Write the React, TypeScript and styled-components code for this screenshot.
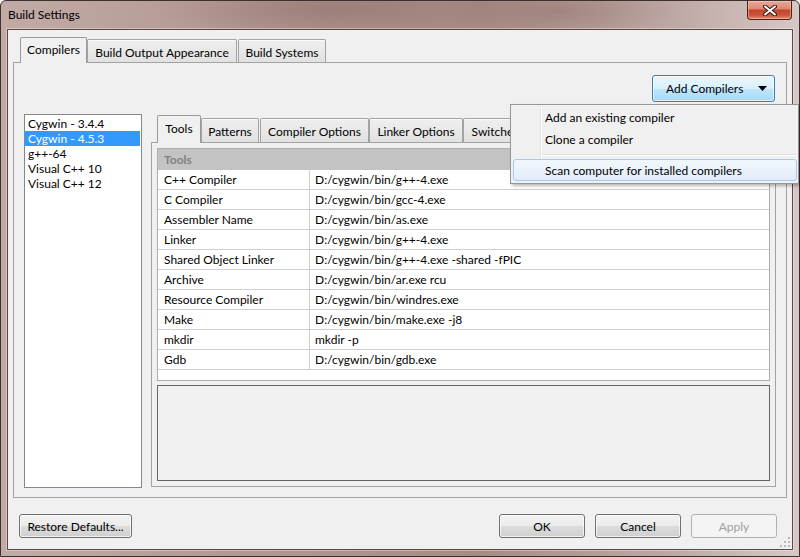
import React from "react";
import styled, { createGlobalStyle, css } from "styled-components";

const FONT = `"Segoe UI", Lato, "Noto Sans", sans-serif`;

const GlobalStyle = createGlobalStyle`
  html, body { margin: 0; padding: 0; background: #ffffff; }
  body { font-family: ${FONT}; font-size: 12px; color: #000; }
  * { box-sizing: border-box; }
`;

const Window = styled.div`
  position: relative;
  width: 800px;
  height: 557px;
  display: flex;
  flex-direction: column;
  border: 1px solid #3d302e;
  border-radius: 6px 6px 0 0;
  background:
    radial-gradient(ellipse 180px 30px at 330px 8px, rgba(120, 90, 85, 0.35), transparent),
    radial-gradient(ellipse 120px 25px at 560px 10px, rgba(120, 90, 85, 0.3), transparent),
    linear-gradient(90deg, #c2aba6 0%, #b39792 30%, #a98b85 60%, #bfa9a5 85%, #d7c8c5 100%);
`;

const TitleBar = styled.div`
  height: 28px;
  display: flex;
  align-items: flex-start;
  justify-content: space-between;
  padding: 0 7px 0 7px;
`;

const Title = styled.div`
  line-height: 28px;
  font-size: 12px;
  color: #000;
`;

const CloseButton = styled.div`
  width: 45px;
  height: 19px;
  border: 1px solid #4f1f16;
  border-top: none;
  border-radius: 0 0 4px 4px;
  background: linear-gradient(#e9a898 0%, #dd8a74 42%, #c4452b 52%, #c9553b 78%, #e28a70 100%);
  box-shadow: inset 0 0 0 1px rgba(255, 220, 210, 0.45);
  display: flex;
  align-items: center;
  justify-content: center;
`;

const Client = styled.div`
  position: relative;
  flex: 1;
  margin: 0 6px 6px 6px;
  border: 1px solid #5a4845;
  box-shadow: 0 0 0 1px rgba(255, 255, 255, 0.35);
  background: #f0f0f0;
  display: flex;
  flex-direction: column;
  padding: 7px 5px 11px 5px;
`;

const TabWidget = styled.div`
  flex: 1;
  display: flex;
  flex-direction: column;
  min-height: 0;
`;

const TabBar = styled.div<{ $h: number; $pad: number }>`
  display: flex;
  align-items: flex-end;
  height: ${(p) => p.$h}px;
  margin-bottom: -1px;
  padding-left: ${(p) => p.$pad}px;
  position: relative;
  z-index: 2;
`;

const Tab = styled.div<{ $selected?: boolean; $w: number; $gap?: number; $h: number }>`
  width: ${(p) => p.$w}px;
  margin-right: ${(p) => p.$gap ?? 0}px;
  height: ${(p) => p.$h}px;
  border: 1px solid #a3a3a3;
  border-bottom: none;
  border-radius: 2px 2px 0 0;
  display: flex;
  justify-content: center;
  align-items: center;
  white-space: nowrap;
  overflow: hidden;
  flex-shrink: 0;
  ${(p) =>
    p.$selected
      ? css`
          background: #f0f0f0;
          border-color: #9a9a9a;
          padding-bottom: 2px;
        `
      : css`
          background: linear-gradient(#efefef, #e1e1e1);
          box-shadow: inset 0 1px 0 #fafafa;
          margin-bottom: 1px;
          padding-top: 2px;
        `}
`;

const Pane = styled.div`
  flex: 1;
  border: 1px solid #a3a3a3;
  background: #f0f0f0;
  display: flex;
  flex-direction: column;
  padding: 12px 10px 9px 10px;
  min-height: 0;
`;

const TopRow = styled.div`
  display: flex;
  justify-content: flex-end;
  padding-right: 1px;
`;

const DropButton = styled.div`
  width: 123px;
  height: 27px;
  border: 1px solid #3c7fb1;
  border-radius: 3px;
  background: linear-gradient(#eaf6fd 0%, #d9f0fc 50%, #bee6fd 51%, #a7d9f5 100%);
  box-shadow: inset 0 0 0 1px rgba(255, 255, 255, 0.6);
  display: flex;
  align-items: center;
  padding-left: 13px;
  gap: 15px;
`;

const MainRow = styled.div`
  flex: 1;
  display: flex;
  gap: 9px;
  margin-top: 12px;
  min-height: 0;
`;

const CompilerList = styled.div`
  width: 118px;
  border: 1px solid #828790;
  background: #fff;
  padding: 1px 1px 1px 0;
  display: flex;
  flex-direction: column;
`;

const ListItem = styled.div<{ $selected?: boolean }>`
  height: 15px;
  line-height: 15px;
  padding-left: 3px;
  white-space: nowrap;
  ${(p) =>
    p.$selected &&
    css`
      background: #3399ff;
      color: #fff;
    `}
`;

const InnerTabs = styled.div`
  flex: 1;
  display: flex;
  flex-direction: column;
  margin-top: 1px;
  margin-bottom: 1px;
  min-width: 0;
`;

const InnerPane = styled.div`
  flex: 1;
  border: 1px solid #a3a3a3;
  background: #f0f0f0;
  padding: 5px;
  display: flex;
  flex-direction: column;
  gap: 4px;
`;

const Table = styled.div`
  height: 233px;
  border: 1px solid #abadb3;
  background: #fff;
  display: flex;
  flex-direction: column;
`;

const HeaderRow = styled.div`
  height: 21px;
  background: #c3c3c3;
  color: #808080;
  font-weight: bold;
  display: flex;
  align-items: center;
  padding-left: 6px;
`;

const Row = styled.div`
  height: 20px;
  display: flex;
  border-bottom: 1px solid #cfcfcf;
`;

const Cell = styled.div<{ $first?: boolean }>`
  display: flex;
  align-items: center;
  white-space: nowrap;
  ${(p) =>
    p.$first
      ? css`
          width: 152px;
          padding-left: 6px;
          border-right: 1px solid #cfcfcf;
        `
      : css`
          flex: 1;
          padding-left: 5px;
        `}
`;

const Details = styled.div`
  flex: 1;
  border: 1px solid #646464;
  background: #f0f0f0;
`;

const ButtonRow = styled.div`
  display: flex;
  align-items: center;
  margin-top: 16px;
  height: 24px;
  padding: 0 10px 0 6px;
  gap: 10px;
`;

const Spacer = styled.div`
  flex: 1;
`;

const PushButton = styled.div<{ $w: number; $disabled?: boolean }>`
  width: ${(p) => p.$w}px;
  height: 24px;
  border-radius: 3px;
  display: flex;
  align-items: center;
  justify-content: center;
  white-space: nowrap;
  ${(p) =>
    p.$disabled
      ? css`
          border: 1px solid #adb2b5;
          background: #f4f4f4;
          color: #a0a0a0;
        `
      : css`
          border: 1px solid #707070;
          background: linear-gradient(#f2f2f2 0%, #ebebeb 50%, #dddddd 51%, #cfcfcf 100%);
          box-shadow: inset 0 0 0 1px rgba(255, 255, 255, 0.7);
          color: #000;
        `}
`;

const Grip = styled.svg`
  position: absolute;
  right: 2px;
  bottom: 2px;
`;

const Menu = styled.div`
  position: absolute;
  left: 509px;
  top: 103px;
  width: 289px;
  background: #f0f0f0;
  border: 1px solid #979797;
  box-shadow: 2px 2px 3px rgba(0, 0, 0, 0.28);
  padding: 1px 1px 2px 2px;
  display: flex;
  flex-direction: column;
  z-index: 10;
  &::before {
    content: "";
    position: absolute;
    left: 29px;
    top: 1px;
    bottom: 1px;
    width: 2px;
    background: linear-gradient(90deg, #e2e3e3 50%, #ffffff 50%);
  }
`;

const MenuItem = styled.div<{ $active?: boolean }>`
  position: relative;
  height: 22px;
  padding-left: 31px;
  border: 1px solid transparent;
  border-radius: 3px;
  display: flex;
  align-items: center;
  white-space: nowrap;
  z-index: 1;
  ${(p) =>
    p.$active &&
    css`
      border-color: #a8caf0;
      background: linear-gradient(#f2f7fd, #e2ecf9);
    `}
`;

const MenuSeparator = styled.div`
  height: 9px;
  margin-left: 28px;
  display: flex;
  align-items: center;
  &::after {
    content: "";
    flex: 1;
    height: 2px;
    background: linear-gradient(#e0e0e0 50%, #ffffff 50%);
  }
`;

const compilers = ["Cygwin - 3.4.4", "Cygwin - 4.5.3", "g++-64", "Visual C++ 10", "Visual C++ 12"];

const rows: [string, string][] = [
  ["C++ Compiler", "D:/cygwin/bin/g++-4.exe"],
  ["C Compiler", "D:/cygwin/bin/gcc-4.exe"],
  ["Assembler Name", "D:/cygwin/bin/as.exe"],
  ["Linker", "D:/cygwin/bin/g++-4.exe"],
  ["Shared Object Linker", "D:/cygwin/bin/g++-4.exe -shared -fPIC"],
  ["Archive", "D:/cygwin/bin/ar.exe rcu"],
  ["Resource Compiler", "D:/cygwin/bin/windres.exe"],
  ["Make", "D:/cygwin/bin/make.exe -j8"],
  ["mkdir", "mkdir -p"],
  ["Gdb", "D:/cygwin/bin/gdb.exe"],
];

const outerTabs = [
  { label: "Compilers", w: 67, gap: 0, sel: true },
  { label: "Build Output Appearance", w: 150, gap: 1 },
  { label: "Build Systems", w: 88, gap: 0 },
];

const innerTabs = [
  { label: "Tools", w: 44, gap: 0, sel: true },
  { label: "Patterns", w: 58, gap: 1 },
  { label: "Compiler Options", w: 109, gap: 0 },
  { label: "Linker Options", w: 94, gap: 0 },
  { label: "Switches", w: 64, gap: 0 },
];

export default function App() {
  return (
    <>
      <GlobalStyle />
      <Window>
        <TitleBar>
          <Title>Build Settings</Title>
          <CloseButton>
            <svg width="14" height="11" viewBox="0 0 14 11">
              <path d="M2 1.5 L12 9.5 M12 1.5 L2 9.5" stroke="#3b1a12" strokeWidth="4" strokeLinecap="round" />
              <path d="M2 1.5 L12 9.5 M12 1.5 L2 9.5" stroke="#ffffff" strokeWidth="2" strokeLinecap="round" />
            </svg>
          </CloseButton>
        </TitleBar>
        <Client>
          <TabWidget>
            <TabBar $h={26} $pad={7}>
              {outerTabs.map((t) => (
                <Tab key={t.label} $selected={t.sel} $w={t.w} $gap={t.gap} $h={t.sel ? 26 : 23}>
                  {t.label}
                </Tab>
              ))}
            </TabBar>
            <Pane>
              <TopRow>
                <DropButton>
                  <span>Add Compilers</span>
                  <svg width="9" height="5" viewBox="0 0 9 5">
                    <path d="M0 0 H9 L4.5 5 Z" fill="#000" />
                  </svg>
                </DropButton>
              </TopRow>
              <MainRow>
                <CompilerList>
                  {compilers.map((c, i) => (
                    <ListItem key={c} $selected={i === 1}>
                      {c}
                    </ListItem>
                  ))}
                </CompilerList>
                <InnerTabs>
                  <TabBar $h={28} $pad={6}>
                    {innerTabs.map((t) => (
                      <Tab key={t.label} $selected={t.sel} $w={t.w} $gap={t.gap} $h={t.sel ? 28 : 24}>
                        {t.label}
                      </Tab>
                    ))}
                  </TabBar>
                  <InnerPane>
                    <Table>
                      <HeaderRow>Tools</HeaderRow>
                      {rows.map(([k, v]) => (
                        <Row key={k}>
                          <Cell $first>{k}</Cell>
                          <Cell>{v}</Cell>
                        </Row>
                      ))}
                    </Table>
                    <Details />
                  </InnerPane>
                </InnerTabs>
              </MainRow>
            </Pane>
          </TabWidget>
          <ButtonRow>
            <PushButton $w={113}>Restore Defaults...</PushButton>
            <Spacer />
            <PushButton $w={86}>OK</PushButton>
            <PushButton $w={86}>Cancel</PushButton>
            <PushButton $w={86} $disabled>
              Apply
            </PushButton>
          </ButtonRow>
          <Grip width="10" height="10" viewBox="0 0 10 10">
            {[
              [8, 0],
              [8, 4],
              [4, 4],
              [8, 8],
              [4, 8],
              [0, 8],
            ].map(([x, y]) => (
              <rect key={`${x}-${y}`} x={x} y={y} width="2" height="2" fill="#b8b8b8" />
            ))}
          </Grip>
        </Client>
        <Menu>
          <MenuItem>Add an existing compiler</MenuItem>
          <MenuItem>Clone a compiler</MenuItem>
          <MenuSeparator />
          <MenuItem $active>Scan computer for installed compilers</MenuItem>
        </Menu>
      </Window>
    </>
  );
}
